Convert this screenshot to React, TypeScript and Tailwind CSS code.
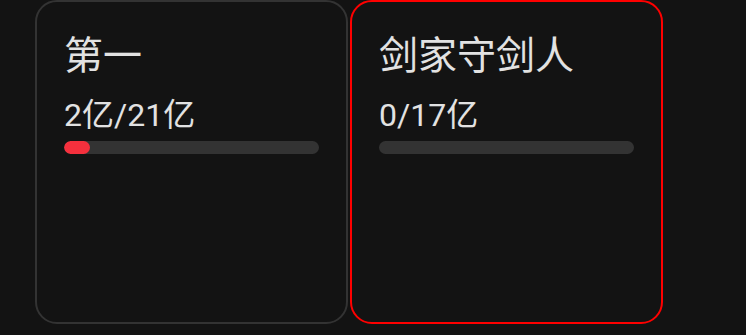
const cards = [
  { name: '第一', value: '2亿/21亿', pct: 2 / 21, active: false },
  { name: '剑家守剑人', value: '0/17亿', pct: 0, active: true },
];

export default function App() {
  return (
    <div className="w-[746px] h-[335px] bg-[#131313] overflow-hidden" style={{ fontFamily: "Roboto, 'Noto Sans CJK SC', sans-serif" }}>
      <div className="flex gap-[2px] pl-[35px]">
        {cards.map((c, i) => (
          <div key={i}
            className={`w-[313px] h-[324px] rounded-[22px] border-2 px-[27px] pt-[35px] ${c.active ? 'border-[#ff0000]' : 'border-[#333333]'}`}>
            <div className="text-[39px] leading-none text-[#e2e2e2]">{c.name}</div>
            <div className="mt-[23px] text-[32px] leading-none text-[#e2e2e2]">{c.value}</div>
            <div className="mt-[10px] h-[13px] rounded-full bg-[#333333] overflow-hidden">
              {c.pct > 0 && <div className="h-full rounded-full bg-[#f5303d] min-w-[26px]" style={{ width: `${c.pct * 100}%` }} />}
            </div>
          </div>
        ))}
      </div>
    </div>
  );
}
